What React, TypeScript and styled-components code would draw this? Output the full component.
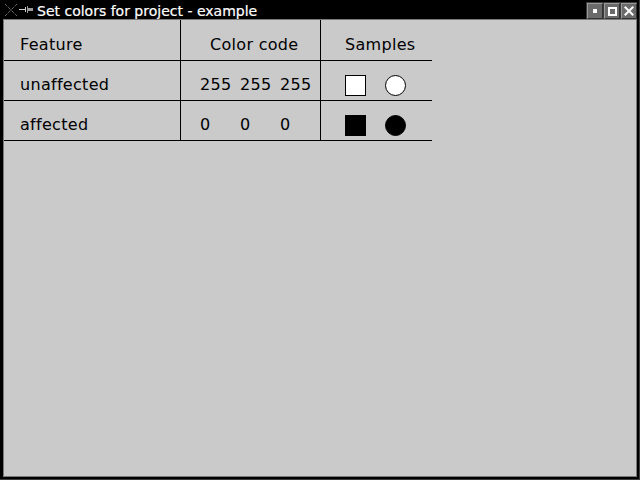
import React from 'react'
import styled, { createGlobalStyle } from 'styled-components'

const GlobalStyle = createGlobalStyle`
  html, body {
    margin: 0;
    padding: 0;
    background: #000;
  }
  body {
    font-family: "DejaVu Sans", "Liberation Sans", sans-serif;
  }
`

type Row = {
  feature: string
  rgb: [number, number, number]
}

const rows: Row[] = [
  { feature: 'unaffected', rgb: [255, 255, 255] },
  { feature: 'affected', rgb: [0, 0, 0] },
]

const App = () => {
  return (
    <>
      <GlobalStyle />
      <Window>
        <TitleBar>
          <AppIcon />
          <TitleText>Set colors for project - example</TitleText>
          <Buttons>
            <WinButton><MinGlyph /></WinButton>
            <WinButton><MaxGlyph /></WinButton>
            <WinButton><CloseGlyph /></WinButton>
          </Buttons>
        </TitleBar>
        <Client>
          <Table>
            <Cell col={1} header>Feature</Cell>
            <Cell col={2} header indent={29}>Color code</Cell>
            <Cell col={3} header>Samples</Cell>
            {rows.map(r => (
              <React.Fragment key={r.feature}>
                <Cell col={1}>{r.feature}</Cell>
                <Cell col={2} indent={19}>
                  {r.rgb.map((v, i) => <Slot key={i}>{v}</Slot>)}
                </Cell>
                <Cell col={3}>
                  <Slot>
                    <Swatch fill={`rgb(${r.rgb.join(',')})`} />
                  </Slot>
                  <Slot>
                    <Swatch round fill={`rgb(${r.rgb.join(',')})`} />
                  </Slot>
                </Cell>
              </React.Fragment>
            ))}
          </Table>
        </Client>
      </Window>
    </>
  )
}

const AppIcon = () => (
  <IconSvg width="30" height="16" viewBox="0 0 30 16">
    <g stroke="#9a9a9a" strokeWidth="1" strokeDasharray="1 1">
      <line x1="1" y1="2" x2="13" y2="14" />
      <line x1="13" y1="2" x2="1" y2="14" />
    </g>
    <line x1="15" y1="7.5" x2="21" y2="7.5" stroke="#cfcfcf" strokeWidth="1" />
    <rect x="21" y="5" width="1" height="5" fill="#cfcfcf" />
    <rect x="23" y="4" width="1" height="7" fill="#9a9a9a" />
    <rect x="24" y="6" width="5" height="3" fill="#9a9a9a" />
  </IconSvg>
)

const Window = styled.div`
  width: 640px;
  height: 480px;
  box-sizing: border-box;
  background: #000;
  display: flex;
  flex-direction: column;
  padding: 0 3px 3px 3px;
  box-shadow: inset -1px -1px 0 #3c3c3c;
`

const TitleBar = styled.div`
  height: 19px;
  display: flex;
  align-items: flex-start;
  color: #fff;
  margin: 0 -3px 0 -3px;
  padding: 0 3px 0 2px;
`

const IconSvg = styled.svg`
  margin-top: 2px;
  margin-left: 2px;
  flex: none;
`

const TitleText = styled.div`
  margin-left: 3px;
  margin-top: 3px;
  font-size: 14px;
  line-height: 16px;
  white-space: nowrap;
  -webkit-text-stroke: 0.2px #fff;
`

const Buttons = styled.div`
  margin-left: auto;
  margin-top: 2px;
  display: flex;
  gap: 1px;
  padding: 1px 0 0 1px;
  background: #3a3a3a;
  height: 17px;
  box-sizing: border-box;
`

const WinButton = styled.div`
  width: 16px;
  height: 16px;
  box-sizing: border-box;
  background: #6a6a6a;
  border-top: 1px solid #9a9a9a;
  border-left: 1px solid #9a9a9a;
  border-right: 1px solid #333;
  border-bottom: 1px solid #333;
  display: flex;
  align-items: center;
  justify-content: center;
`

const MinGlyph = styled.div`
  width: 4px;
  height: 4px;
  background: #fff;
`

const MaxGlyph = styled.div`
  width: 9px;
  height: 9px;
  box-sizing: border-box;
  border: 2px solid #fff;
`

const CloseGlyph = styled.div`
  position: relative;
  width: 10px;
  height: 10px;
  &::before, &::after {
    content: '';
    position: absolute;
    left: -1px;
    top: 4px;
    width: 12px;
    height: 2px;
    background: #fff;
    transform: rotate(45deg);
  }
  &::after {
    transform: rotate(-45deg);
  }
`

const Client = styled.div`
  flex: 1;
  background: #cacaca;
  border: 1px solid #7a7a7a;
`

const Table = styled.div`
  display: grid;
  grid-template-columns: 177px 140px 111px;
  grid-auto-rows: 40px;
  grid-template-rows: 41px;
  color: #000;
  font-size: 16px;
  letter-spacing: 0.3px;
`

const Cell = styled.div<{ col: number; header?: boolean; indent?: number }>`
  box-sizing: border-box;
  border-bottom: 1px solid #000;
  border-right: ${({ col }) => (col < 3 ? '1px solid #000' : 'none')};
  padding-top: ${({ header }) => (header ? 15 : 14)}px;
  padding-left: ${({ col, indent }) => indent ?? (col === 1 ? 16 : 24)}px;
  display: flex;
  align-items: flex-start;
  line-height: 19px;
  white-space: nowrap;
`

const Slot = styled.span`
  width: 40px;
  flex: none;
  display: flex;
  align-items: flex-start;
`

const Swatch = styled.div<{ fill: string; round?: boolean }>`
  width: 21px;
  height: 21px;
  box-sizing: border-box;
  border: 1px solid #000;
  background: ${({ fill }) => fill};
  border-radius: ${({ round }) => (round ? '50%' : '0')};
`

export default App
